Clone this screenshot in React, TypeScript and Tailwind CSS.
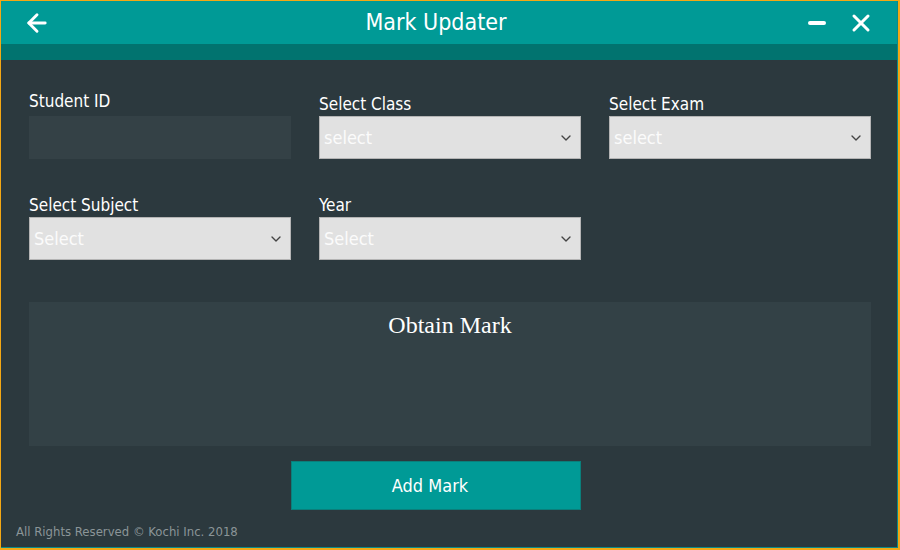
import { ArrowLeft, ChevronDown, Minus, X } from "lucide-react";

const font = "font-['Tahoma','DejaVu_Sans_Condensed','Noto_Sans',sans-serif]";

function Field({ label, value, lift }: { label: string; value?: string; lift?: boolean }) {
  return (
    <div className="flex flex-col">
      <span className={`text-[17px] leading-[22px] text-white ${lift ? "mb-[4px] -mt-[3px]" : "mb-[1px]"}`}>
        {label}
      </span>
      {value === undefined ? (
        <div className="h-[43px] bg-[#344146]" />
      ) : (
        <div className="flex h-[43px] items-center justify-between border border-[#b4b4b4] bg-[#e1e1e1] pl-[4px] pr-[6px]">
          <span className="text-[18px] text-[#fbfbfb]">{value}</span>
          <ChevronDown size={16} strokeWidth={2} className="text-[#444]" />
        </div>
      )}
    </div>
  );
}

export default function App() {
  return (
    <div
      className={`${font} flex h-[550px] w-[900px] flex-col border-[2px] border-l-[1px] border-t-[1px] border-[#f4a814] bg-[#2c393e]`}
    >
      <div className="flex flex-1 flex-col border-b border-r border-[#0d8a86]">
        <header className="relative flex h-[43px] items-center justify-center bg-[#009a96]">
          <ArrowLeft size={28} strokeWidth={2.5} className="absolute left-[22px] top-[8px] text-white" />
          <h1 className="-ml-[26px] text-[23px] text-white">Mark Updater</h1>
          <div className="absolute right-[22px] top-[8px] flex items-center gap-[18px] text-white">
            <Minus size={24} strokeWidth={4} />
            <X size={28} strokeWidth={2.6} />
          </div>
        </header>
        <div className="h-[16px] bg-[#01736f]" />

        <main className="flex flex-1 flex-col pl-[28px] pr-[26px] pt-[33px]">
          <div className="grid grid-cols-3 gap-x-[28px] gap-y-[35px]">
            <Field label="Student ID" lift />
            <Field label="Select Class" value="select" />
            <Field label="Select Exam" value="select" />
            <Field label="Select Subject" value="Select" />
            <Field label="Year" value="Select" />
          </div>

          <section className="mt-[42px] flex h-[144px] justify-center bg-[#334146] pt-[8px]">
            <h2 className="font-['Liberation_Serif',serif] text-[24px] leading-[30px] text-white">Obtain Mark</h2>
          </section>

          <div className="mt-[15px] flex justify-center">
            <button className="ml-[-28px] h-[49px] w-[290px] border border-[#0a7f7b] bg-[#009a96] pr-[12px] text-[18px] text-white">
              Add Mark
            </button>
          </div>

          <footer className="-ml-[13px] mt-[12px] text-[13px] text-[#8b9598]">
            All Rights Reserved © Kochi Inc. 2018
          </footer>
        </main>
      </div>
    </div>
  );
}
